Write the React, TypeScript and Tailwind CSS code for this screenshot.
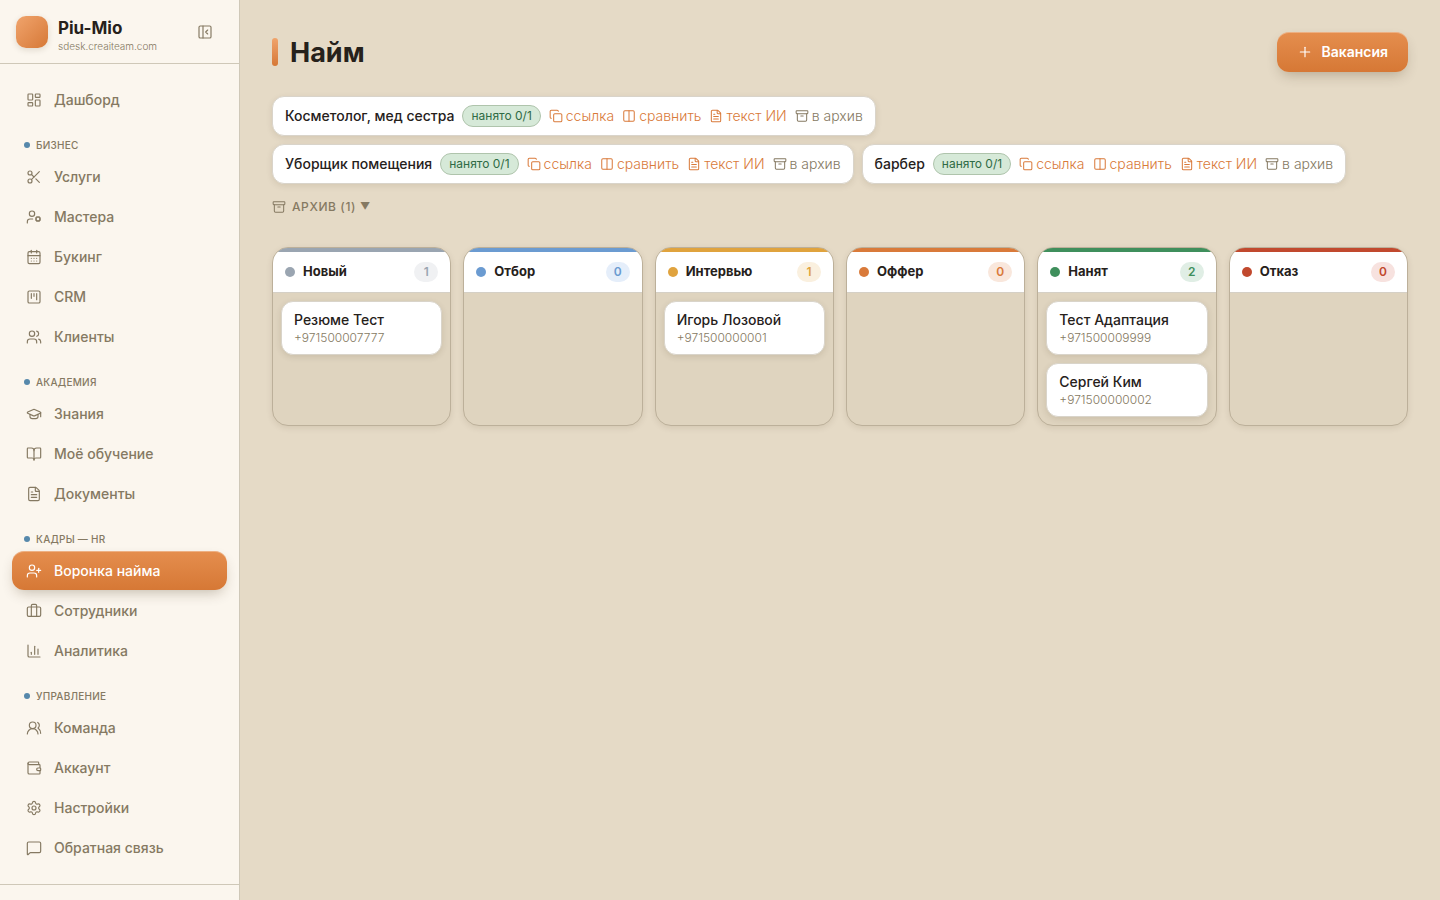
import { useState } from "react";
import {
  Archive,
  BookOpen,
  Briefcase,
  CalendarDays,
  ChartColumn,
  Columns2,
  Copy,
  FileText,
  GraduationCap,
  LayoutDashboard,
  MessageSquare,
  PanelLeftClose,
  Plus,
  Scissors,
  Settings,
  SquareKanban,
  UserCog,
  UserPlus,
  Users,
  UsersRound,
  Wallet,
  type LucideIcon,
} from "lucide-react";

interface NavItem {
  label: string;
  icon: LucideIcon;
}

interface NavSection {
  title?: string;
  items: NavItem[];
}

const NAV: NavSection[] = [
  { items: [{ label: "Дашборд", icon: LayoutDashboard }] },
  {
    title: "Бизнес",
    items: [
      { label: "Услуги", icon: Scissors },
      { label: "Мастера", icon: UserCog },
      { label: "Букинг", icon: CalendarDays },
      { label: "CRM", icon: SquareKanban },
      { label: "Клиенты", icon: Users },
    ],
  },
  {
    title: "Академия",
    items: [
      { label: "Знания", icon: GraduationCap },
      { label: "Моё обучение", icon: BookOpen },
      { label: "Документы", icon: FileText },
    ],
  },
  {
    title: "Кадры — HR",
    items: [
      { label: "Воронка найма", icon: UserPlus },
      { label: "Сотрудники", icon: Briefcase },
      { label: "Аналитика", icon: ChartColumn },
    ],
  },
  {
    title: "Управление",
    items: [
      { label: "Команда", icon: UsersRound },
      { label: "Аккаунт", icon: Wallet },
      { label: "Настройки", icon: Settings },
      { label: "Обратная связь", icon: MessageSquare },
    ],
  },
];

const VACANCIES = ["Косметолог, мед сестра", "Уборщик помещения", "барбер"];

interface Candidate {
  name: string;
  phone: string;
}

interface Stage {
  title: string;
  color: string;
  badge: string;
  candidates: Candidate[];
}

const STAGES: Stage[] = [
  {
    title: "Новый",
    color: "bg-[#9aa5b1]",
    badge: "bg-[#f0f1f3] text-[#9aa5b1]",
    candidates: [{ name: "Резюме Тест", phone: "+971500007777" }],
  },
  {
    title: "Отбор",
    color: "bg-[#6b9bd1]",
    badge: "bg-[#e5eefa] text-[#6b9bd1]",
    candidates: [],
  },
  {
    title: "Интервью",
    color: "bg-[#e0a33e]",
    badge: "bg-[#faf0df] text-[#e0a33e]",
    candidates: [{ name: "Игорь Лозовой", phone: "+971500000001" }],
  },
  {
    title: "Оффер",
    color: "bg-[#d97a3a]",
    badge: "bg-[#f9e7dc] text-[#d97a3a]",
    candidates: [],
  },
  {
    title: "Нанят",
    color: "bg-[#3f8f5c]",
    badge: "bg-[#e0eee5] text-[#3f8f5c]",
    candidates: [
      { name: "Тест Адаптация", phone: "+971500009999" },
      { name: "Сергей Ким", phone: "+971500000002" },
    ],
  },
  {
    title: "Отказ",
    color: "bg-[#c1492e]",
    badge: "bg-[#f7e2df] text-[#c1492e]",
    candidates: [],
  },
];

function Sidebar() {
  const [active, setActive] = useState("Воронка найма");

  return (
    <aside className="sticky top-0 flex h-screen w-60 shrink-0 flex-col border-r border-[#cfc8b8] bg-[#fbf6ee]">
      <div className="flex h-16 shrink-0 items-center border-b border-[#cfc8b8] px-4">
        <span className="h-8 w-8 rounded-[10px] bg-linear-to-br from-[#f0a46c] to-[#d67835] shadow-[0_2px_6px_rgba(60,40,10,0.14)]" />
        <div className="ml-[10px] flex-1 pt-1">
          <p className="text-[17px] leading-6 font-bold text-[#26211b]">Piu-Mio</p>
          <p className="text-[10px] leading-3 font-light text-[#857962]">sdesk.creaiteam.com</p>
        </div>
        <button type="button" aria-label="Свернуть меню" className="p-[10px] text-[#857962]">
          <PanelLeftClose size={16} strokeWidth={1.75} />
        </button>
      </div>

      <nav className="min-h-0 flex-1 overflow-hidden px-3 pt-4">
        {NAV.map((section) => (
          <div key={section.items[0].label}>
            {section.title && (
              <h2 className="mt-4 mb-[2px] flex h-5 items-center gap-[6px] pl-3 text-[10px] font-medium tracking-wide text-[#857962] uppercase">
                <span className="h-[6px] w-[6px] rounded-full bg-[#5688ab]" />
                {section.title}
              </h2>
            )}
            <ul className="flex flex-col gap-px">
              {section.items.map(({ label, icon: Icon }) => (
                <li key={label}>
                  <a
                    href="#"
                    onClick={() => setActive(label)}
                    className={`flex h-[39px] items-center gap-3 rounded-xl px-[14px] text-sm font-medium ${
                      active === label
                        ? "bg-linear-to-b from-[#e58e4e] to-[#d67835] text-white shadow-[inset_0_1px_0_rgba(255,255,255,0.3),0_6px_14px_-4px_rgba(60,40,10,0.3)]"
                        : "text-[#857962]"
                    }`}
                  >
                    <Icon size={16} strokeWidth={1.75} />
                    {label}
                  </a>
                </li>
              ))}
            </ul>
          </div>
        ))}
      </nav>
      <div className="h-4 shrink-0 border-t border-[#cfc8b8]" />
    </aside>
  );
}

function VacancyAction({ icon: Icon, label, muted }: { icon: LucideIcon; label: string; muted?: boolean }) {
  return (
    <button
      type="button"
      className={`flex items-center gap-[3px] text-sm font-light ${muted ? "text-[#857962]" : "text-[#d97a3a]"}`}
    >
      <Icon size={14} strokeWidth={1.75} />
      {label}
    </button>
  );
}

function VacancyChip({ title }: { title: string }) {
  return (
    <div className="flex h-10 items-center gap-2 rounded-xl border border-[#d9d4ca] bg-white px-3 whitespace-nowrap shadow-[0_2px_6px_rgba(60,40,10,0.1)]">
      <span className="text-sm font-medium text-[#26211b]">{title}</span>
      <span className="flex h-[22px] items-center rounded-full border border-[#afc4ac] bg-[#d6e9d8] px-2 text-xs text-[#2f6b45]">
        нанято 0/1
      </span>
      <VacancyAction icon={Copy} label="ссылка" />
      <VacancyAction icon={Columns2} label="сравнить" />
      <VacancyAction icon={FileText} label="текст ИИ" />
      <VacancyAction icon={Archive} label="в архив" muted />
    </div>
  );
}

function StageColumn({ stage }: { stage: Stage }) {
  return (
    <section className="overflow-hidden rounded-2xl border border-[#bcb09a] bg-[#dfd4bf] shadow-[0_2px_6px_rgba(60,40,10,0.1)]">
      <div className={`h-1 ${stage.color}`} />
      <header className="flex h-[41px] items-center border-b border-[#d5d0c6] bg-white px-3">
        <span className={`h-[10px] w-[10px] rounded-full ${stage.color}`} />
        <h2 className="ml-2 flex-1 text-[13px] font-bold text-[#26211b]">{stage.title}</h2>
        <span className={`flex h-5 w-6 items-center justify-center rounded-full text-xs font-semibold ${stage.badge}`}>
          {stage.candidates.length}
        </span>
      </header>
      <div className="flex flex-col gap-2 p-2">
        {stage.candidates.map((c) => (
          <article
            key={c.phone}
            className="rounded-xl border border-[#d9d4ca] bg-white px-3 py-2 shadow-[0_2px_6px_rgba(60,40,10,0.12)]"
          >
            <h3 className="text-sm leading-5 font-medium text-[#26211b]">{c.name}</h3>
            <p className="text-xs leading-4 font-light text-[#857962]">{c.phone}</p>
          </article>
        ))}
      </div>
    </section>
  );
}

export default function App() {
  return (
    <div className="flex min-h-screen bg-[#e5dac6] font-['Inter','Noto_Sans',sans-serif]">
      <Sidebar />
      <main className="min-w-0 flex-1 px-8 pt-8">
        <div className="flex h-10 items-center justify-between">
          <div className="flex items-center gap-3">
            <span className="h-7 w-[6px] rounded-full bg-linear-to-b from-[#f0a46c] to-[#d67835]" />
            <h1 className="pt-px text-[27px] leading-10 font-bold text-[#26211b]">Найм</h1>
          </div>
          <button
            type="button"
            className="flex h-10 items-center gap-2 rounded-xl bg-linear-to-b from-[#e58e4e] to-[#d67835] px-5 text-sm font-semibold text-white shadow-[inset_0_1px_0_rgba(255,255,255,0.3),0_6px_14px_-4px_rgba(60,40,10,0.3)]"
          >
            <Plus size={16} strokeWidth={1.75} />
            Вакансия
          </button>
        </div>

        <div className="mt-6 flex flex-wrap gap-2">
          {VACANCIES.map((title) => (
            <VacancyChip key={title} title={title} />
          ))}
        </div>

        <button type="button" className="mt-[13px] flex h-5 items-center text-xs font-medium tracking-wider text-[#857962] uppercase">
          <Archive size={14} strokeWidth={1.75} className="mr-[6px]" />
          Архив (1)
          <span className="ml-1 text-[10px]">▼</span>
        </button>

        <div className="mt-[30px] grid grid-cols-6 gap-3">
          {STAGES.map((stage) => (
            <StageColumn key={stage.title} stage={stage} />
          ))}
        </div>
      </main>
    </div>
  );
}
